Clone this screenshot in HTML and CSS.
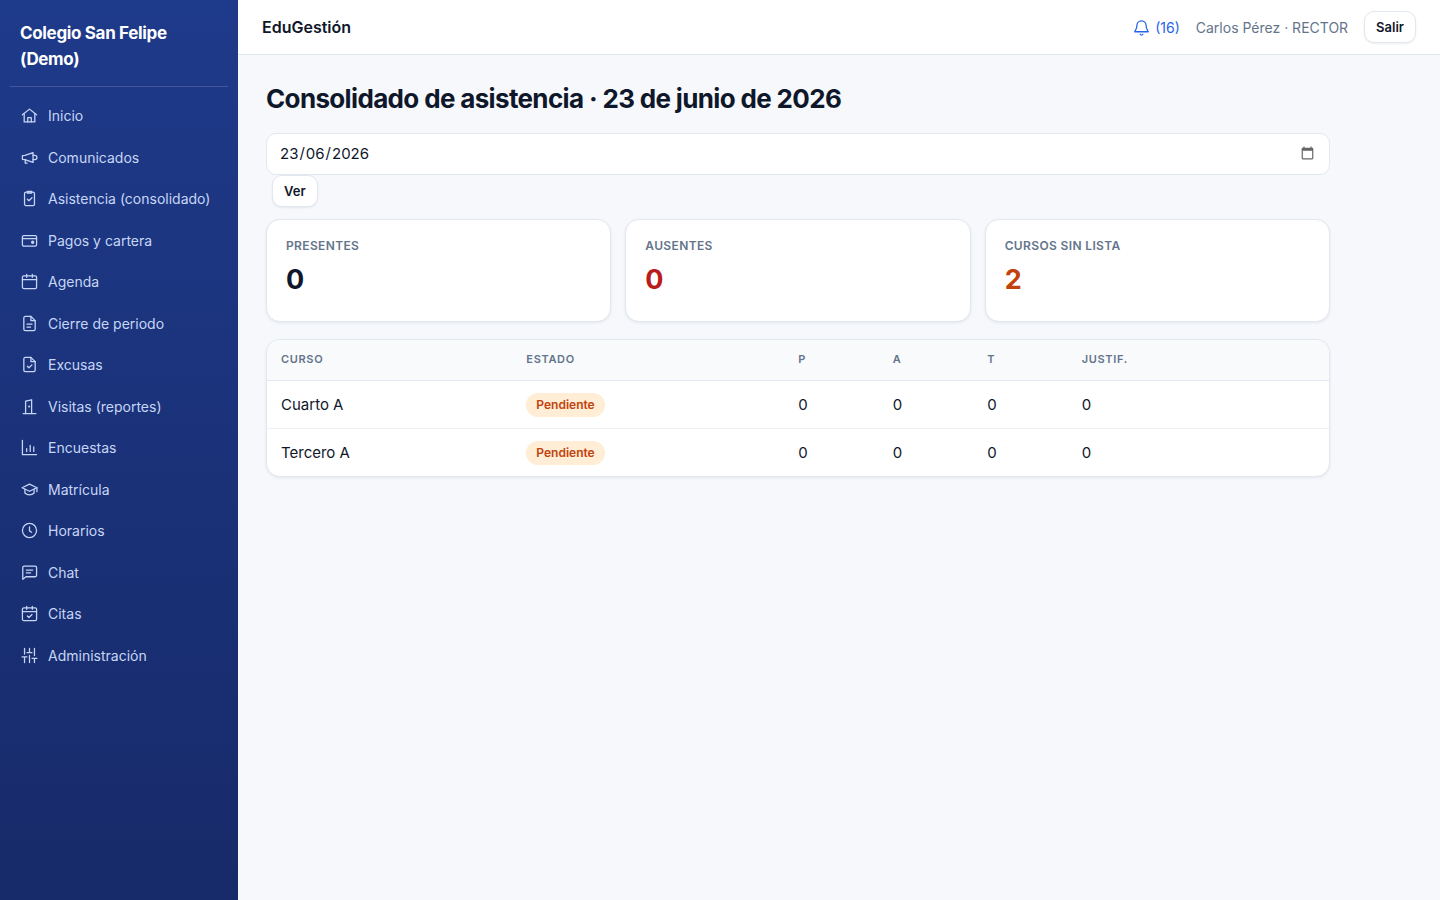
FILE: index.html
```html
<!DOCTYPE html>
<html lang="es">
<head>
  <meta charset="UTF-8" />
  <meta name="viewport" content="width=device-width, initial-scale=1.0" />
  <title>Consolidado de asistencia - EduGestión</title>
  <link rel="stylesheet" href="styles.css">
</head>
<body>
  <div class="layout">
    <aside class="sidebar">
      <div class="brand">Colegio San Felipe (Demo)</div>
      <nav class="menu">
        <a href="#"><svg class="icon" viewBox="0 0 24 24"><path d="M2 11 12 3l10 8"/><path d="M4.500 9.500V21h15V9.500"/><path d="M9.500 21v-6h5v6"/></svg>Inicio</a>
        <a href="#"><svg class="icon" viewBox="0 0 24 24"><path d="M2 9.500v5l3.500.5L17 19V5L5.500 9z"/><path d="M6 15v5h2.500"/><path d="M17 9h2.500a3 3 0 0 1 0 6H17"/></svg>Comunicados</a>
        <a href="#"><svg class="icon" viewBox="0 0 24 24"><rect x="5" y="3" width="14" height="19" rx="2"/><path d="M9 2h6v2.500H9z"/><path d="m9 13 2.200 2.200L15.500 11"/></svg>Asistencia (consolidado)</a>
        <a href="#"><svg class="icon" viewBox="0 0 24 24"><rect x="2" y="5" width="20" height="15" rx="2"/><path d="M2 9.500h20"/><circle class="dot" cx="16.500" cy="14.500" r="1.500"/></svg>Pagos y cartera</a>
        <a href="#"><svg class="icon" viewBox="0 0 24 24"><rect x="2" y="4" width="20" height="18" rx="2"/><path d="M2 9.500h20M8 2v4M16 2v4"/></svg>Agenda</a>
        <a href="#"><svg class="icon" viewBox="0 0 24 24"><path d="M14 2H6a2 2 0 0 0-2 2v16a2 2 0 0 0 2 2h12a2 2 0 0 0 2-2V8z"/><path d="M14 2v6h6M8.500 13h7M8.500 17h5"/></svg>Cierre de periodo</a>
        <a href="#"><svg class="icon" viewBox="0 0 24 24"><path d="M14 2H6a2 2 0 0 0-2 2v16a2 2 0 0 0 2 2h12a2 2 0 0 0 2-2V8z"/><path d="M14 2v6h6M9 14.500l2.200 2.200 4.300-4.200"/></svg>Excusas</a>
        <a href="#"><svg class="icon" viewBox="0 0 24 24"><path d="M3 22h18M6.500 22V4.500L15 2.500V22"/><circle class="dot" cx="11.500" cy="12" r=".6"/></svg>Visitas (reportes)</a>
        <a href="#"><svg class="icon" viewBox="0 0 24 24"><path d="M2 2v20h20M8 17.500v-4M13 17.500V9M18 17.500V11"/></svg>Encuestas</a>
        <a href="#"><svg class="icon" viewBox="0 0 24 24"><path d="m1.500 9.500 10.500-5 10.500 5L12 14.500z"/><path d="M5.500 11.500V17c3.500 3.500 9.500 3.500 13 0v-5.500M22.500 9.500V15"/></svg>Matrícula</a>
        <a href="#"><svg class="icon" viewBox="0 0 24 24"><circle cx="12" cy="12" r="10"/><path d="M12 7v5.500l3 2"/></svg>Horarios</a>
        <a href="#"><svg class="icon" viewBox="0 0 24 24"><path d="M22 5v11a2 2 0 0 1-2 2H7l-4.500 3.500V5a2 2 0 0 1 2-2H20a2 2 0 0 1 2 2z"/><path d="M7.500 8.500h9M7.500 12.500h6"/></svg>Chat</a>
        <a href="#"><svg class="icon" viewBox="0 0 24 24"><rect x="2" y="4" width="20" height="18" rx="2"/><path d="M2 9.500h20M8 2v4M16 2v4M9 15.500l2.200 2.200 4.300-4.200"/></svg>Citas</a>
        <a href="#"><svg class="icon" viewBox="0 0 24 24"><path d="M5 2v8M5 14v8M12 2v6M12 12v10M19 2v10M19 16v6M1.500 14h7M8.500 8h7M15.500 16h7"/></svg>Administración</a>
      </nav>
    </aside>

    <div class="page">
      <header class="topbar">
        <strong class="app-name">EduGestión</strong>
        <div class="user-area">
          <a class="notifications" href="#" aria-label="Notificaciones (16)"><svg class="icon" viewBox="0 0 24 24"><path d="M18.500 9a6.500 6.500 0 0 0-13 0c0 6-3 7.500-3 9h19c0-1.500-3-3-3-9"/><path d="M10 21.500a2.300 2.300 0 0 0 4 0"/></svg>(16)</a>
          <span class="user-name">Carlos Pérez · RECTOR</span>
          <button type="button" class="btn">Salir</button>
        </div>
      </header>

      <main class="content">
        <h1>Consolidado de asistencia · 23 de junio de 2026</h1>

        <form class="filter">
          <input type="date" id="fecha" name="fecha" value="2026-06-23" aria-label="Fecha" />
          <button type="submit" class="btn">Ver</button>
        </form>

        <div class="cards">
          <div class="card"><div class="label">Presentes</div><div class="value">0</div></div>
          <div class="card"><div class="label">Ausentes</div><div class="value danger">0</div></div>
          <div class="card"><div class="label">Cursos sin lista</div><div class="value warning">2</div></div>
        </div>

        <div class="table-box">
          <table>
            <colgroup>
              <col class="col-course"><col class="col-status"><col class="col-num"><col class="col-num"><col class="col-num"><col>
            </colgroup>
            <thead>
              <tr><th>Curso</th><th>Estado</th><th>P</th><th>A</th><th>T</th><th>Justif.</th></tr>
            </thead>
            <tbody>
              <tr><td>Cuarto A</td><td><span class="badge">Pendiente</span></td><td>0</td><td>0</td><td>0</td><td>0</td></tr>
              <tr><td>Tercero A</td><td><span class="badge">Pendiente</span></td><td>0</td><td>0</td><td>0</td><td>0</td></tr>
            </tbody>
          </table>
        </div>
      </main>
    </div>
  </div>
</body>
</html>
```
FILE: styles.css
```css
* {
  box-sizing: border-box;
}
body {
  margin: 0;
  font-family: Inter, "Liberation Sans", sans-serif;
  font-size: 15px;
  line-height: 23px;
  color: #0f172a;
  background: #f6f8fc;
}
.layout {
  display: flex;
  min-height: 100vh;
}
.sidebar {
  flex: 0 0 238px;
  padding: 20px 10px;
  background: linear-gradient(180deg, #1e3a8a, #172a69);
}
.brand {
  padding: 0 10px 14px;
  margin-bottom: 8px;
  border-bottom: 1px solid rgba(255, 255, 255, 0.16);
  color: #fff;
  font-size: 17px;
  font-weight: 700;
  line-height: 26px;
  letter-spacing: -0.02em;
}
.menu a {
  display: flex;
  align-items: center;
  gap: 10px;
  padding: 9px 11px;
  border-radius: 8px;
  color: #c7d6f5;
  font-size: 14px;
  line-height: 1.68;
  text-decoration: none;
}
.icon {
  flex: none;
  width: 17px;
  height: 17px;
  fill: none;
  stroke: currentColor;
  stroke-width: 1.8;
  stroke-linecap: round;
  stroke-linejoin: round;
}
.icon .dot {
  fill: currentColor;
}
.page {
  flex: 1;
  min-width: 0;
}
.topbar {
  display: flex;
  align-items: center;
  justify-content: space-between;
  padding: 11px 24px;
  background: #fff;
  border-bottom: 1px solid #e2e8f0;
}
.app-name {
  font-size: 16px;
  font-weight: 600;
}
.user-area {
  display: flex;
  align-items: center;
  gap: 16px;
  font-size: 14px;
}
.notifications {
  display: flex;
  align-items: center;
  gap: 5px;
  color: #2563eb;
  text-decoration: none;
}
.user-name {
  color: #64748b;
}
.btn {
  height: 32px;
  padding: 0 11px;
  border: 1px solid #e2e8f0;
  border-radius: 10px;
  background: #fff;
  box-shadow: 0 1px 2px rgba(15, 23, 42, 0.08);
  color: #0f172a;
  font-family: inherit;
  font-size: 13px;
  font-weight: 600;
  cursor: pointer;
}
.content {
  max-width: 1120px;
  padding: 28px;
}
h1 {
  margin: 0 0 18px;
  font-size: 26px;
  font-weight: 700;
  line-height: 32px;
  letter-spacing: -0.025em;
}
.filter {
  margin-bottom: 12px;
}
.filter input {
  display: block;
  width: 100%;
  height: 42px;
  padding: 7px 12px 9px;
  border: 1px solid #e2e8f0;
  border-radius: 10px;
  background: #fff;
  color: #0f172a;
  font-family: inherit;
  font-size: 15px;
}
/* always day / month / year, whatever the browser language */
.filter input::-webkit-datetime-edit-fields-wrapper {
  display: grid;
  grid-template-columns: repeat(5, auto);
  justify-content: start;
}
.filter input::-webkit-datetime-edit-text {
  grid-row: 1;
}
.filter input::-webkit-datetime-edit-day-field {
  grid-area: 1 / 1;
}
.filter input::-webkit-datetime-edit-month-field {
  grid-area: 1 / 3;
}
.filter input::-webkit-datetime-edit-year-field {
  grid-area: 1 / 5;
}
.filter input::-webkit-calendar-picker-indicator {
  opacity: 0.6;
}
.filter .btn {
  display: block;
  margin-left: 6px;
}
.cards {
  display: grid;
  grid-template-columns: repeat(3, 1fr);
  gap: 14px;
  margin-bottom: 17px;
}
.card,
.table-box {
  border: 1px solid #e2e8f0;
  border-radius: 14px;
  background: #fff;
  box-shadow: 0 1px 3px rgba(15, 23, 42, 0.08);
}
.card {
  padding: 16px 19px 20px;
}
.label {
  color: #64748b;
  font-size: 12px;
  font-weight: 600;
  line-height: 19px;
  letter-spacing: 0.03em;
  text-transform: uppercase;
}
.value {
  margin-top: 4px;
  font-size: 27px;
  font-weight: 700;
  line-height: 42px;
}
.danger {
  color: #b91c1c;
}
.warning {
  color: #c2410c;
}
.table-box {
  overflow: hidden;
}
table {
  width: 100%;
  border-collapse: collapse;
  table-layout: fixed;
}
.col-course {
  width: 23.1%;
}
.col-status {
  width: 25.6%;
}
.col-num {
  width: 8.9%;
}
th,
td {
  padding: 11px 14px;
  text-align: left;
}
th {
  padding: 9px 14px 11px;
  background: #f8fafc;
  border-bottom: 1px solid #e2e8f0;
  color: #64748b;
  font-size: 11px;
  font-weight: 600;
  line-height: 20px;
  letter-spacing: 0.06em;
  text-transform: uppercase;
}
td {
  border-bottom: 1px solid #eef2f7;
}
tr:last-child td {
  border-bottom: 0;
}
.badge {
  display: inline-block;
  padding: 2px 10px;
  border-radius: 999px;
  background: #ffedd5;
  color: #c2410c;
  font-size: 12px;
  font-weight: 600;
  line-height: 20px;
  vertical-align: middle;
}
```
